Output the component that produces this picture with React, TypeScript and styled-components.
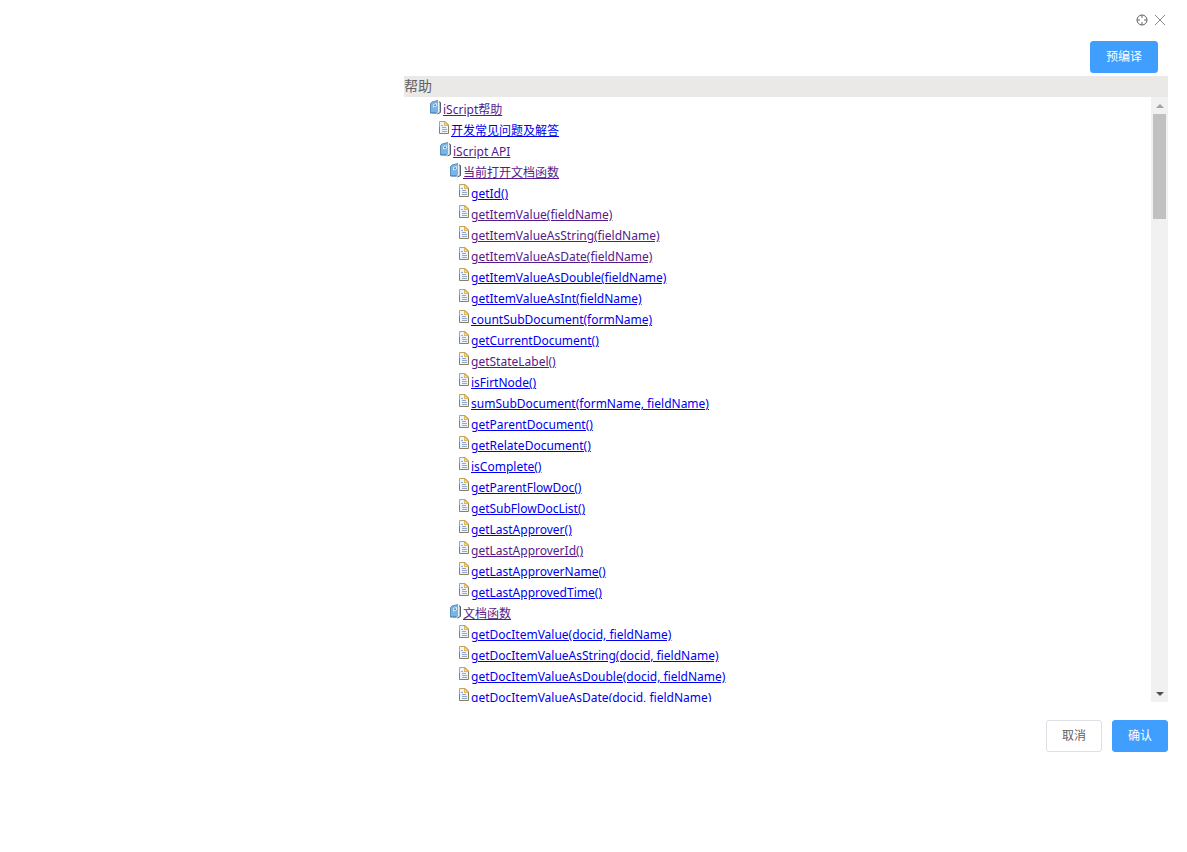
import React from "react";
import styled, { createGlobalStyle } from "styled-components";

const GlobalStyle = createGlobalStyle`
  * { box-sizing: border-box; }
  body {
    margin: 0;
    background: #fff;
    color: #606266;
    font: 12px/20px "Noto Sans", "Noto Sans CJK SC", sans-serif;
  }
`;

const Page = styled.main`
  display: flex;
  flex-direction: column;
  min-height: 100vh;
  padding: 12px 19px 0 404px;
`;

const WindowControls = styled.div`
  display: flex;
  justify-content: flex-end;
  gap: 4px;
  height: 16px;
  padding-right: 1px;
`;

const IconButton = styled.button`
  display: flex;
  align-items: center;
  justify-content: center;
  width: 14px;
  height: 16px;
  padding: 0;
  border: 0;
  background: none;
  color: #606266;
`;

const Toolbar = styled.div`
  display: flex;
  justify-content: flex-end;
  padding: 13px 10px 3px 0;
`;

const Button = styled.button<{ $primary?: boolean }>`
  height: 32px;
  padding: 0 15px;
  border: 1px solid ${(p) => (p.$primary ? "#409eff" : "#dcdfe6")};
  border-radius: 3px;
  background: ${(p) => (p.$primary ? "#409eff" : "#fff")};
  color: ${(p) => (p.$primary ? "#fff" : "#606266")};
  font: inherit;
  line-height: 30px;
  white-space: nowrap;
`;

const PanelTitle = styled.h2`
  height: 21px;
  margin: 0;
  background: #ebe9e8;
  font-size: 14px;
  font-weight: 400;
  line-height: 20px;
`;

const Panel = styled.section`
  display: flex;
  height: calc(100vh - 247px);
`;

const TreeView = styled.nav`
  flex: 1;
  overflow: hidden;
  padding: 2px 0 0 16px;
`;

const Branch = styled.ul`
  margin: 0;
  padding: 0 0 0 10px;
  list-style: none;
`;

const Row = styled.div<{ $doc: boolean }>`
  display: flex;
  gap: 2px;
  height: 21px;
  margin-left: ${(p) => (p.$doc ? "-1px" : "0")};
  white-space: nowrap;
  svg { flex: none; margin-top: 1px; }
`;

const TreeLink = styled.a<{ $visited: boolean }>`
  color: ${(p) => (p.$visited ? "#551a8b" : "#0000ee")};
  line-height: 21px;
`;

const Scrollbar = styled.div`
  display: flex;
  flex-direction: column;
  width: 17px;
  background: #f1f1f1;
`;

const ScrollArrow = styled.button`
  display: flex;
  align-items: center;
  justify-content: center;
  height: 17px;
  padding: 0;
  border: 0;
  background: none;
`;

const ScrollTrack = styled.div`
  flex: 1;
  padding: 0 2px;
`;

const ScrollThumb = styled.div`
  height: 105px;
  background: #c1c1c1;
`;

const Footer = styled.footer`
  display: flex;
  justify-content: flex-end;
  gap: 10px;
  padding-top: 18px;
`;

const BookIcon = () => (
  <svg width="11" height="15" viewBox="0 0 11 15" aria-hidden="true">
    <path d="M3 1.5 9.5.5V2H10.5V13L7 14.5 3 13Z" fill="#f4f7f9" />
    <path d="M8.5 1.5 10.5 2.5V12.5L7.5 14" fill="#b4c2cc" stroke="#52616c" />
    <path d="M.5 3.5 2 2 8 .5V12L6.5 13.5.5 13Z" fill="#79b4e6" />
    <path d="M.5 13V3.5L2 2 8 .5" fill="none" stroke="#5d8fba" />
    <path d="M.5 13H6.5" stroke="#3f6f9a" />
    <path d="M8.5 1V12.5" stroke="#e8f1f7" />
    <path d="M3.5 4.5 6.5 3.5V6L3.5 7Z" fill="#4f88ba" stroke="#d8ebf9" />
  </svg>
);

const DocIcon = () => (
  <svg width="10" height="13" viewBox="0 0 10 13" aria-hidden="true">
    <path d="M.5.5H6L9.5 4V12.5H.5Z" fill="#eef4fc" />
    <path d="M6 0 10 4V5H5V0Z" fill="#dcb766" />
    <path d="M6 2V4H8Z" fill="#f6e2b0" />
    <path d="M.5 7V.5H6L9.5 4V7" fill="none" stroke="#c5a355" />
    <path d="M.5 6V12.5H9.5V5" fill="none" stroke="#8c8060" />
    <path d="M2 4.5H4M3 6.5H7M3 8.5H8M3 10.5H8" stroke="#92a9cc" />
  </svg>
);

type Node = { label: string; visited?: boolean; children?: Node[] };

const link = (label: string): Node => ({ label });
const seen = (label: string): Node => ({ label, visited: true });

const tree: Node[] = [
  {
    label: "iScript帮助",
    visited: true,
    children: [
      link("开发常见问题及解答"),
      {
        label: "iScript API",
        visited: true,
        children: [
          {
            label: "当前打开文档函数",
            visited: true,
            children: [
              link("getId()"),
              seen("getItemValue(fieldName)"),
              seen("getItemValueAsString(fieldName)"),
              seen("getItemValueAsDate(fieldName)"),
              link("getItemValueAsDouble(fieldName)"),
              link("getItemValueAsInt(fieldName)"),
              link("countSubDocument(formName)"),
              link("getCurrentDocument()"),
              seen("getStateLabel()"),
              link("isFirtNode()"),
              link("sumSubDocument(formName, fieldName)"),
              link("getParentDocument()"),
              link("getRelateDocument()"),
              link("isComplete()"),
              link("getParentFlowDoc()"),
              link("getSubFlowDocList()"),
              link("getLastApprover()"),
              seen("getLastApproverId()"),
              link("getLastApproverName()"),
              link("getLastApprovedTime()"),
            ],
          },
          {
            label: "文档函数",
            visited: true,
            children: [
              link("getDocItemValue(docid, fieldName)"),
              link("getDocItemValueAsString(docid, fieldName)"),
              link("getDocItemValueAsDouble(docid, fieldName)"),
              link("getDocItemValueAsDate(docid, fieldName)"),
            ],
          },
        ],
      },
    ],
  },
];

const Tree = ({ nodes }: { nodes: Node[] }) => (
  <Branch>
    {nodes.map((node) => (
      <li key={node.label}>
        <Row $doc={!node.children}>
          {node.children ? <BookIcon /> : <DocIcon />}
          <TreeLink href="#" $visited={!!node.visited}>{node.label}</TreeLink>
        </Row>
        {node.children && <Tree nodes={node.children} />}
      </li>
    ))}
  </Branch>
);

export default function App() {
  return (
    <Page>
      <GlobalStyle />
      <WindowControls>
        <IconButton aria-label="定位">
          <svg width="12" height="12" viewBox="0 0 12 12" fill="none" stroke="currentColor">
            <circle cx="6" cy="6" r="5" />
            <path d="M6 1V4M6 8V11M1 6H4M8 6H11" />
          </svg>
        </IconButton>
        <IconButton aria-label="关闭">
          <svg width="12" height="12" viewBox="0 0 12 12" fill="none" stroke="#85888d">
            <path d="M1 1 11 11M11 1 1 11" />
          </svg>
        </IconButton>
      </WindowControls>
      <Toolbar>
        <Button $primary>预编译</Button>
      </Toolbar>
      <PanelTitle>帮助</PanelTitle>
      <Panel>
        <TreeView>
          <Tree nodes={tree} />
        </TreeView>
        <Scrollbar>
          <ScrollArrow aria-label="向上滚动">
            <svg width="8" height="4" viewBox="0 0 8 4"><path d="M0 4 4 0 8 4Z" fill="#a3a3a3" /></svg>
          </ScrollArrow>
          <ScrollTrack>
            <ScrollThumb />
          </ScrollTrack>
          <ScrollArrow aria-label="向下滚动">
            <svg width="8" height="4" viewBox="0 0 8 4"><path d="M0 0 4 4 8 0Z" fill="#505050" /></svg>
          </ScrollArrow>
        </Scrollbar>
      </Panel>
      <Footer>
        <Button>取消</Button>
        <Button $primary>确认</Button>
      </Footer>
    </Page>
  );
}
